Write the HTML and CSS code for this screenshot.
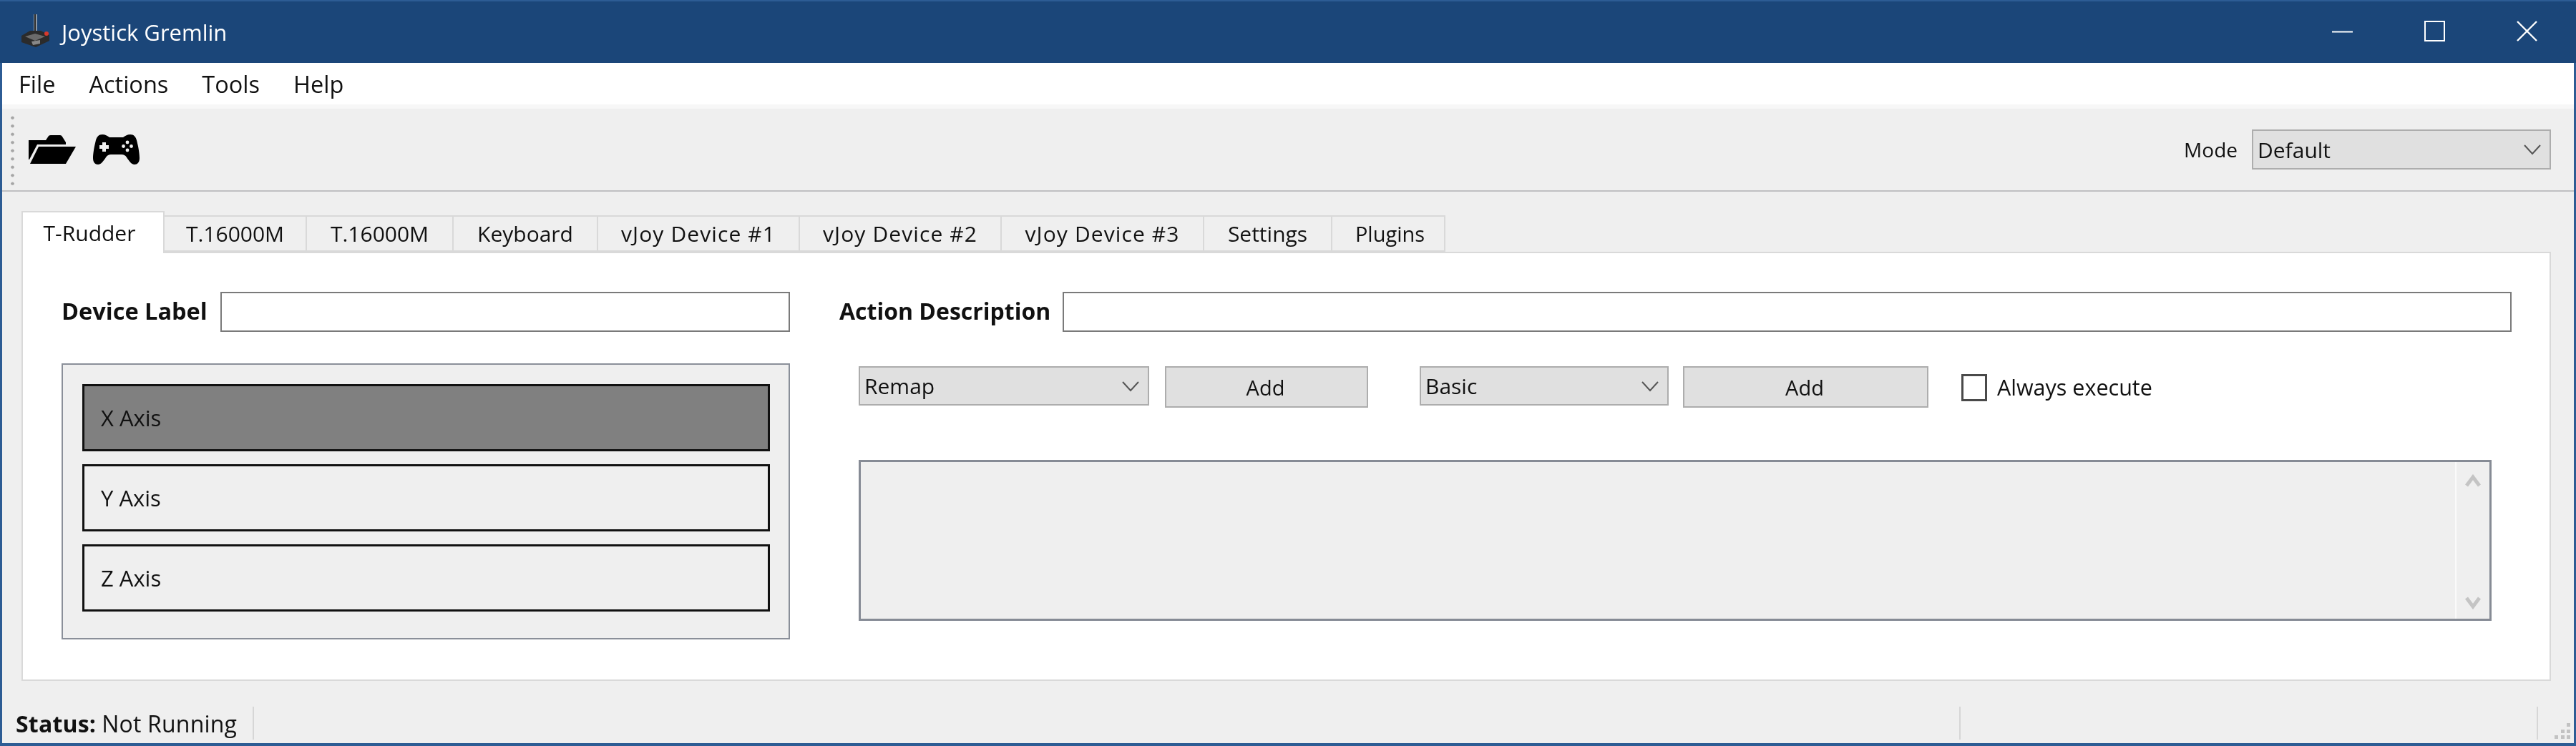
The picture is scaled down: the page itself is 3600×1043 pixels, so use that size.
FILE: index.html
```html
<!DOCTYPE html>
<html lang="en">
<head>
<meta charset="utf-8">
<title>Joystick Gremlin</title>
<link rel="stylesheet" href="styles.css">
</head>
<body>
<div class="window">
  <header class="titlebar">
    <svg class="app-icon" viewBox="0 0 42 46" width="42" height="46" aria-hidden="true">
      <rect x="19" y="0" width="5" height="28" fill="#8d99a6"/>
      <rect x="20" y="0" width="2" height="28" fill="#2a2a2a"/>
      <path d="M2 30 L14 23 H29 L41 29 V37 L22 46 L2 39 Z" fill="#2b2b2b"/>
      <path d="M7 31 L21 27 L35 31 L21 37 Z" fill="#6b6b6b"/>
      <path d="M16 38 L28 36 V41 L18 43 Z" fill="#888"/>
      <circle cx="37" cy="27" r="3" fill="#d8392b"/>
    </svg>
    <span class="app-title">Joystick Gremlin</span>
    <div class="win-controls">
      <svg class="win-btn" viewBox="0 0 29 29" width="29" height="29" aria-hidden="true"><path d="M0 15.500 H29" stroke="#fff" stroke-width="2"/></svg>
      <svg class="win-btn" viewBox="0 0 29 29" width="29" height="29" aria-hidden="true"><rect x="1" y="1" width="27" height="27" fill="none" stroke="#fff" stroke-width="2"/></svg>
      <svg class="win-btn" viewBox="0 0 29 29" width="29" height="29" aria-hidden="true"><path d="M1 1 L28 28 M28 1 L1 28" stroke="#fff" stroke-width="2.400"/></svg>
    </div>
  </header>

  <nav class="menubar">
    <span class="menu-item">File</span>
    <span class="menu-item">Actions</span>
    <span class="menu-item">Tools</span>
    <span class="menu-item">Help</span>
  </nav>

  <div class="toolbar">
    <div class="grip"></div>
    <svg class="tool-folder" viewBox="0 0 66 40" width="66" height="40" aria-hidden="true">
      <path d="M0 7 H24 L28 1 Q29 0 31 0 H44 Q46 0 47 2 L52 10 V13 H12 L1 34 H0 Z" fill="#000"/>
      <path d="M14 16 H66 L52 40 H2 Z" fill="#000"/>
    </svg>
    <svg class="tool-pad" viewBox="0 0 65 42" width="65" height="42" aria-hidden="true">
      <path d="M13 0 C8 0 5 3 3.500 10 C1 20 0 28 0 33 C0 39 3 42 7 42 C11 42 14 38 18 32 C20 29 22 28 25 28 H40 C43 28 45 29 47 32 C51 38 54 42 58 42 C62 42 65 39 65 33 C65 28 64 20 61.500 10 C60 3 57 0 52 0 C48 0 45 2 42 4 H23 C20 2 17 0 13 0 Z" fill="#000"/>
      <path d="M13 11 H18 V15 H22 V20 H18 V24 H13 V20 H9 V15 H13 Z" fill="#efefef"/>
      <circle cx="48" cy="11" r="2.400" fill="#efefef"/>
      <circle cx="48" cy="22" r="2.400" fill="#efefef"/>
      <circle cx="42.500" cy="16.500" r="2.400" fill="#efefef"/>
      <circle cx="53.500" cy="16.500" r="2.400" fill="#efefef"/>
    </svg>
    <div class="mode">
      <span class="mode-label">Mode</span>
      <div class="combo combo-mode">
        <span>Default</span>
        <svg class="chev" viewBox="0 0 24 16" width="24" height="16" aria-hidden="true"><path d="M1 2 L12 14 L23 2" fill="none" stroke="#555" stroke-width="2"/></svg>
      </div>
    </div>
  </div>

  <main class="content">
    <div class="tabs">
      <div class="tab tab-active">T-Rudder</div>
      <div class="tab">T.16000M</div>
      <div class="tab">T.16000M</div>
      <div class="tab">Keyboard</div>
      <div class="tab tab-spaced">vJoy Device #1</div>
      <div class="tab tab-spaced">vJoy Device #2</div>
      <div class="tab tab-spaced">vJoy Device #3</div>
      <div class="tab">Settings</div>
      <div class="tab tab-plugins">Plugins</div>
    </div>
    <section class="pane">
      <div class="left-col">
        <div class="field">
          <label class="field-label label-device">Device Label</label>
          <div class="text-input"></div>
        </div>
        <div class="axis-list">
          <div class="axis axis-selected">X Axis</div>
          <div class="axis">Y Axis</div>
          <div class="axis">Z Axis</div>
        </div>
      </div>
      <div class="right-col">
        <div class="field">
          <label class="field-label label-action">Action Description</label>
          <div class="text-input"></div>
        </div>
        <div class="actions-row">
          <div class="combo combo-remap">
            <span>Remap</span>
            <svg class="chev" viewBox="0 0 24 16" width="24" height="16" aria-hidden="true"><path d="M1 2 L12 14 L23 2" fill="none" stroke="#555" stroke-width="2"/></svg>
          </div>
          <div class="button button-a">Add</div>
          <div class="combo combo-basic">
            <span>Basic</span>
            <svg class="chev" viewBox="0 0 24 16" width="24" height="16" aria-hidden="true"><path d="M1 2 L12 14 L23 2" fill="none" stroke="#555" stroke-width="2"/></svg>
          </div>
          <div class="button button-b">Add</div>
          <div class="check-wrap">
            <span class="checkbox"></span>
            <span>Always execute</span>
          </div>
        </div>
        <div class="scroll-frame">
          <div class="scroll-body"></div>
          <div class="scrollbar">
            <svg viewBox="0 0 22 18" width="22" height="18" aria-hidden="true"><path d="M2 16 L11 4 L20 16" fill="none" stroke="#c4c4c4" stroke-width="5"/></svg>
            <svg viewBox="0 0 22 18" width="22" height="18" aria-hidden="true"><path d="M2 2 L11 14 L20 2" fill="none" stroke="#c4c4c4" stroke-width="5"/></svg>
          </div>
        </div>
      </div>
    </section>
  </main>

  <footer class="statusbar">
    <div class="status-cell status-main"><b>Status:</b> Not Running</div>
    <div class="status-cell status-fill"></div>
    <div class="status-cell status-mid"></div>
    <div class="size-grip">
      <i></i><i></i><i></i><i></i><i></i><i></i>
    </div>
  </footer>
</div>
</body>
</html>
```

FILE: styles.css
```css
* { box-sizing: border-box; }
html, body { margin: 0; height: 100%; }
body {
  font-family: "Open Sans", "Noto Sans", sans-serif;
  font-size: 30px;
  color: #111;
  background: #efefef;
}
.window {
  width: 3600px;
  height: 1043px;
  display: flex;
  flex-direction: column;
  border-left: 3px solid #2d5c94;
  border-right: 3px solid #2d5c94;
  border-bottom: 4px solid #2d5c94;
  background: #efefef;
  filter: blur(0.5px);
}

/* title bar */
.titlebar {
  height: 88px;
  margin-left: -3px;
  margin-right: -3px;
  flex: none;
  display: flex;
  align-items: center;
  background: #1b4679;
  color: #fff;
  padding-left: 28px;
  border-top: 2px solid #2d5c94;
}
.app-icon { margin-top: -4px; flex: none; }
.app-title { margin-left: 16px; font-size: 31px; margin-top: -1px; }
.win-controls {
  margin-left: auto;
  margin-right: 54px;
  margin-top: -4px;
  display: flex;
  gap: 100px;
}

/* menu */
.menubar {
  height: 58px;
  flex: none;
  background: #fff;
  display: flex;
  align-items: center;
  padding-left: 23px;
  gap: 47px;
  font-size: 32.500px;
}

/* toolbar */
.toolbar {
  height: 122px;
  flex: none;
  display: flex;
  align-items: center;
  border-top: 6px solid #f7f7f7;
  border-bottom: 2px solid #bfc0c2;
  padding-left: 12px;
  padding-right: 32px;
  background: #efefef;
}
.grip {
  width: 5px;
  height: 100px;
  background-image: radial-gradient(circle, #a6a6a6 2px, transparent 2.500px);
  background-size: 5px 11.500px;
}
.tool-folder { margin-left: 20px; }
.tool-pad { margin-left: 24px; }
.mode {
  margin-left: auto;
  display: flex;
  align-items: center;
  gap: 20px;
  font-size: 28px;
}

/* combo + button */
.combo {
  display: flex;
  align-items: center;
  justify-content: space-between;
  background: #e0e0e0;
  border: 2px solid #adadad;
  padding: 0 12px 0 6px;
  font-size: 30px;
}
.combo-mode { width: 418px; height: 56px; }
.combo-remap { width: 406px; height: 55px; }
.combo-basic { width: 348px; height: 55px; margin-left: 72px; }
.button {
  height: 58px;
  display: flex;
  align-items: center;
  justify-content: center;
  background: #e0e0e0;
  border: 2px solid #adadad;
  padding-right: 3px;
  font-size: 29px;
}
.button-a { width: 284px; margin-left: 22px; }
.button-b { width: 343px; margin-left: 20px; }

/* tabs */
.content {
  flex: 1;
  display: flex;
  flex-direction: column;
  padding: 27px 32px 0 27px;
}
.tabs {
  display: grid;
  grid-template-columns: 200px 199px 205px 202px 282px 282px 283px 179px 158px;
  justify-content: start;
  height: 57px;
  flex: none;
  position: relative;
  z-index: 1;
  align-items: end;
  font-size: 30px;
}
.tab {
  height: 51px;
  display: flex;
  align-items: center;
  justify-content: center;
  border: 2px solid #d9d9d9;
  border-left-width: 0;
  background: #efefef;
  white-space: nowrap;
}
.tab-spaced { letter-spacing: 1.100px; }
.tab-plugins { padding-left: 5px; font-size: 29px; }
.tab-active {
  height: 59px;
  margin-bottom: -2px;
  background: #fff;
  border-left-width: 2px;
  border-bottom: 0;
  padding-right: 10px;
}

/* pane */
.pane {
  height: 600px;
  flex: none;
  display: flex;
  background: #fff;
  border: 2px solid #d9d9d9;
  padding: 54px 53px 0 54px;
  gap: 69px;
  font-size: 30px;
}
.left-col { width: 1018px; flex: none; display: flex; flex-direction: column; }
.right-col { flex: 1; display: flex; flex-direction: column; }
.field {
  display: flex;
  align-items: center;
  height: 56px;
  flex: none;
}
.field-label { font-weight: 700; white-space: nowrap; font-size: 32.500px; flex: none; padding-bottom: 3px; }
.label-device { width: 222px; }
.label-action { width: 312px; font-size: 32px; }
.text-input {
  flex: 1;
  height: 56px;
  background: #fff;
  border: 2px solid #7a7a7a;
}

/* axis list */
.axis-list {
  margin-top: 44px;
  height: 386px;
  display: flex;
  flex-direction: column;
  gap: 18px;
  padding: 27px 26px 0 27px;
  background: #efefef;
  border: 2px solid #8a8f99;
}
.axis {
  height: 94px;
  display: flex;
  align-items: center;
  padding-left: 23px;
  border: 3px solid #111;
  font-size: 31px;
}
.axis-selected { background: #808080; }

/* actions */
.actions-row {
  margin-top: 48px;
  margin-left: 27px;
  display: flex;
  align-items: flex-start;
  height: 58px;
}
.check-wrap {
  margin-left: 46px;
  display: flex;
  align-items: center;
  gap: 14px;
  height: 58px;
  font-size: 30.500px;
}
.checkbox {
  width: 36px;
  height: 38px;
  background: #fff;
  border: 3px solid #4a4a4a;
  margin-top: 2px;
}
.scroll-frame {
  margin-top: 73px;
  margin-left: 27px;
  width: 2282px;
  height: 225px;
  display: flex;
  background: #efefef;
  border: 3px solid #868b95;
}
.scroll-body { flex: 1; }
.scrollbar {
  width: 48px;
  flex: none;
  display: flex;
  flex-direction: column;
  align-items: center;
  justify-content: space-between;
  padding: 17px 0 13px;
  border-left: 2px solid #fafafa;
}

/* status bar */
.statusbar {
  flex: 1;
  display: flex;
  align-items: flex-end;
  padding: 0 0 5px 19px;
  font-size: 32px;
  letter-spacing: 0.200px;
  position: relative;
}
.status-cell {
  height: 46px;
  display: flex;
  align-items: center;
  gap: 8px;
  border-right: 2px solid #d6d6d6;
  white-space: nowrap;
}
.status-main { width: 333px; }
.status-fill { width: 2385px; }
.status-mid { width: 807px; }
.size-grip {
  display: grid;
  grid-template-columns: repeat(3, 5px);
  grid-template-rows: repeat(3, 5px);
  gap: 3.500px;
  margin-left: 23px;
  margin-bottom: 1px;
}
.size-grip i { background: #c2c2c2; }
.size-grip i:nth-child(1) { grid-area: 1 / 3; }
.size-grip i:nth-child(2) { grid-area: 2 / 2; }
.size-grip i:nth-child(3) { grid-area: 2 / 3; }
.size-grip i:nth-child(4) { grid-area: 3 / 1; }
.size-grip i:nth-child(5) { grid-area: 3 / 2; }
.size-grip i:nth-child(6) { grid-area: 3 / 3; }
```
